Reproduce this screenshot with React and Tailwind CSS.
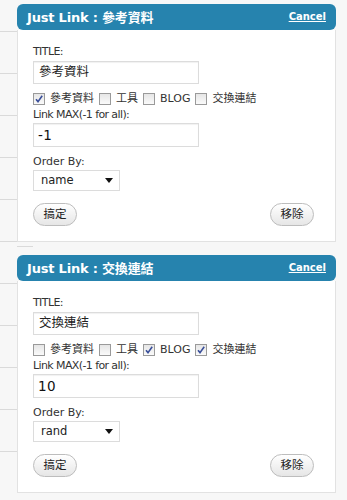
import React from "react";

const FONT = { fontFamily: '"DejaVu Sans", Verdana, "Noto Sans CJK TC", sans-serif' };

function Checkbox({ checked }) {
  return (
    <span className="inline-flex w-[12px] h-[12px] border border-[#9a9a9a] bg-gradient-to-b from-[#e6e6e6] to-[#fafafa] items-center justify-center shrink-0">
      {checked && (
        <svg width="10" height="10" viewBox="0 0 10 10">
          <path d="M2 5.2 L4 7.6 L8.2 1.8" fill="none" stroke="#3a4f9a" strokeWidth="1.6" />
        </svg>
      )}
    </span>
  );
}

function CheckItem({ checked, label }) {
  return (
    <span className="flex items-center gap-[5px]">
      <Checkbox checked={checked} />
      <span className="text-[11px] leading-[14px] text-[#333]">{label}</span>
    </span>
  );
}

function Panel({ name, checks, max, order }) {
  return (
    <div className="w-[319px]">
      <div className="h-[26px] bg-[#2683ae] rounded-[6px] flex items-center justify-between pl-[10px] pr-[10px]">
        <span className="text-white font-bold text-[13px] leading-none tracking-[-0.2px]">
          Just Link : {name}
        </span>
        <span className="text-white text-[10px] underline leading-none font-semibold">Cancel</span>
      </div>
      <div className="bg-white border-x border-b border-[#e2e2e2] pl-[15px] pt-[16px] pb-[15px]">
        <div className="text-[11px] leading-[12px] text-[#333] tracking-[-0.6px]">TITLE:</div>
        <div className="mt-[3px] w-[166px] h-[23px] border border-[#dcdcdc] shadow-[inset_0_1px_1px_rgba(0,0,0,0.06)] flex items-center pl-[5px] text-[12.5px] text-[#222]">
          {name}
        </div>
        <div className="mt-[8px] flex items-center gap-[5px] h-[14px]">
          <CheckItem checked={checks[0]} label="參考資料" />
          <CheckItem checked={checks[1]} label="工具" />
          <CheckItem checked={checks[2]} label="BLOG" />
          <CheckItem checked={checks[3]} label="交換連結" />
        </div>
        <div className="mt-[3px] text-[11px] leading-[12px] text-[#333] tracking-[-0.6px]">Link MAX(-1 for all):</div>
        <div className="mt-[2px] w-[166px] h-[24px] border border-[#dcdcdc] shadow-[inset_0_1px_1px_rgba(0,0,0,0.06)] flex items-center pl-[4px] text-[13.5px] text-[#111] tracking-[0.5px]">
          {max}
        </div>
        <div className="mt-[9px] text-[11px] leading-[12px] text-[#333]">Order By:</div>
        <div className="mt-[2px] w-[87px] h-[21px] border border-[#dcdcdc] flex items-center justify-between pl-[7px] pr-[6px] text-[11.5px] text-[#222]">
          <span>{order}</span>
          <svg width="8" height="5" viewBox="0 0 8 5">
            <path d="M0 0 H8 L4 5 Z" fill="#111" />
          </svg>
        </div>
        <div className="mt-[12px] flex justify-between w-[281px]">
          <span className="w-[44px] h-[23px] rounded-full border border-[#bdbdbd] bg-gradient-to-b from-white to-[#e6e6e6] flex items-center justify-center text-[11.5px] text-[#222]">搞定</span>
          <span className="w-[44px] h-[23px] rounded-full border border-[#bdbdbd] bg-gradient-to-b from-white to-[#e6e6e6] flex items-center justify-center text-[11.5px] text-[#222]">移除</span>
        </div>
      </div>
    </div>
  );
}

export default function App() {
  const rows = [42, 42, 42, 42, 42, 42, 42, 42, 42, 42];
  return (
    <div className="w-[347px] h-[500px] bg-[#f7f7f7] flex overflow-hidden" style={FONT}>
      <div className="w-[17px] flex flex-col shrink-0">
        <div className="h-[32px] border-b border-[#dadada] shrink-0" />
        {rows.map((h, i) => (
          <div key={i} className="h-[42px] border-b border-[#dadada] shrink-0" />
        ))}
      </div>
      <div className="flex flex-col pt-[4px]">
        <Panel name="參考資料" checks={[true, false, false, false]} max="-1" order="name" />
        <div className="h-[13px] flex flex-col">
          <div className="h-[5px] w-[16px] border-b border-[#dadada]" />
        </div>
        <Panel name="交換連結" checks={[false, false, true, true]} max="10" order="rand" />
      </div>
    </div>
  );
}
